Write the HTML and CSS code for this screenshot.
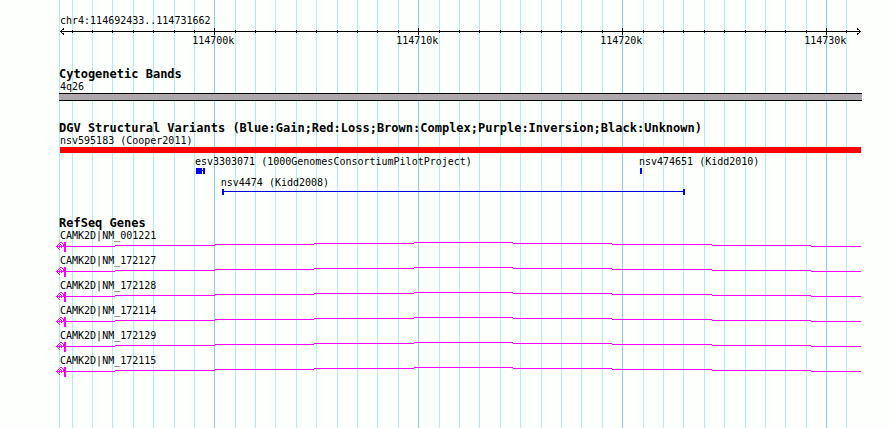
FILE: index.html
```
<!DOCTYPE html>
<html lang="en">
<head>
<meta charset="utf-8">
<title>chr4:114692433..114731662</title>
<link rel="stylesheet" href="styles.css">
</head>
<body>
<main class="browser">
  <svg class="grid" id="grid" viewBox="0 0 890 428" preserveAspectRatio="none" aria-hidden="true"></svg>

  <header class="ruler">
    <h1 class="label">chr4:114692433..114731662</h1>
    <svg class="strip axis" id="axis" viewBox="0 0 890 8" preserveAspectRatio="none" aria-hidden="true">
      <path class="line" d="M60 4h801v1h-801z"/>
      <path class="head" d="M64 1.500L60.500 4.500L64 7.500M857 1.500L860.500 4.500L857 7.500"/>
    </svg>
    <div class="scale"><span>114700k</span><span>114710k</span><span>114720k</span><span>114730k</span></div>
  </header>

  <section class="track">
    <h2>Cytogenetic Bands</h2>
    <p class="label">4q26</p>
    <svg class="strip" viewBox="0 0 890 8" preserveAspectRatio="none" aria-hidden="true">
      <path class="band-fill" d="M59 0h803v8h-803z"/>
      <path class="line" d="M59 0h803v1h-803zM59 7h803v1h-803z"/>
    </svg>
  </section>

  <section class="track variants">
    <h2>DGV Structural Variants (Blue:Gain;Red:Loss;Brown:Complex;Purple:Inversion;Black:Unknown)</h2>
    <div class="row">
      <p class="label">nsv595183 (Cooper2011)</p>
      <svg class="strip" viewBox="0 0 890 7" preserveAspectRatio="none" aria-hidden="true">
        <path class="loss" d="M60 0h801v6h-801z"/>
      </svg>
    </div>
    <div class="row">
      <div class="pair"><p>esv3303071 (1000GenomesConsortiumPilotProject)</p><p>nsv474651 (Kidd2010)</p></div>
      <svg class="strip" viewBox="0 0 890 7" preserveAspectRatio="none" aria-hidden="true">
        <path class="gain" d="M196 0h6v6h-6zM202 2h1v1h-1zM203 0h2v6h-2zM640 0h2v6h-2z"/>
      </svg>
    </div>
    <div class="row">
      <p class="label inner">nsv4474 (Kidd2008)</p>
      <svg class="strip" viewBox="0 0 890 7" preserveAspectRatio="none" aria-hidden="true">
        <path class="gain" d="M222 0h2v6h-2zM683 0h2v6h-2z"/>
        <path class="gain-line" d="M224 2h459v1h-459z"/>
      </svg>
    </div>
  </section>

  <section class="track genes">
    <h2>RefSeq Genes</h2>
    <div id="genes"></div>
  </section>
</main>
<script src="script.js"></script>
</body>
</html>
```
FILE: styles.css
```
body {
  margin: 0;
  background: #fdfffc;
  color: #000;
  font: 10px/12px "DejaVu Sans Mono", monospace;
}

.browser {
  position: relative;
  z-index: 0;
  box-sizing: border-box;
  min-height: 100vh;
  padding-top: 15px;
  overflow: hidden;
}

/* Guide lines lie behind every track */
.grid {
  position: absolute;
  top: 0;
  left: 0;
  width: 100%;
  height: 100%;
  z-index: -1;
  shape-rendering: crispEdges;
}
.minor { fill: #afeeee; }
.major { fill: #87ceeb; }

h1, h2, p { margin: 0; white-space: nowrap; }
h1 { font: inherit; }
h2 {
  padding-left: 59px;
  font-size: 12px;
  line-height: 13px;
}

.label { padding-left: 60px; }
.inner { padding-left: 24.8%; }

.pair {
  display: grid;
  grid-template-columns: minmax(0, 444fr) minmax(0, 251fr);
  padding-left: 21.9%;
}

.scale {
  display: flex;
  justify-content: space-between;
  padding: 0 4.9% 0 21.6%;
}

.track { margin-top: 21px; }

.strip {
  display: block;
  width: 100%;
  height: 8px;
  shape-rendering: crispEdges;
  overflow: visible;
}
.variants .strip { height: 7px; }
.variants .row + .row { margin-top: 2px; }
.genes .strip { height: 10px; }
.genes .row + .row { margin-top: 3px; }

.line { fill: #000; }
.head { fill: none; stroke: #000; }
.band-fill { fill: #aca8ac; }
.loss { fill: #f00; }
.gain { fill: #00f; }
.gain-line { fill: #0000dc; }
.gene { fill: #f0f; }
```
FILE: script.js
```
const minor = [59, 72, 92, 112, 133, 153, 174, 194, 235, 255, 275, 296, 316, 337, 357,
  377, 398, 439, 459, 479, 500, 520, 541, 561, 581, 602, 643, 663, 683, 704, 724, 745,
  765, 785, 806, 846];
const major = [214, 418, 622, 826];
const genes = ["NM_001221", "NM_172127", "NM_172128", "NM_172114", "NM_172129", "NM_172115"];

// Vertical one-unit bars at each x
const bars = (xs, y, h) => xs.map(x => `M${x} ${y}h1v${h}h-1z`).join("");

document.getElementById("grid").innerHTML =
  `<path class="minor" d="${bars(minor, 0, 428)}"/><path class="major" d="${bars(major, 0, 428)}"/>`;

document.getElementById("axis").insertAdjacentHTML("beforeend",
  `<path class="line" d="${bars(minor.slice(1), 3, 3)}${bars(major, 1, 7)}"/>`);

// The intron line rises to the middle of the view and falls again
const steps = [57, 115, 215, 314, 414, 513, 612, 712, 811, 861];
const intron = steps.slice(0, -1).map((x, i) => {
  const w = steps[i + 1] - x;
  return `M${x} ${Math.abs(4 - i)}h${w}v1h-${w}z`;
}).join("");

// Strand arrow, drawn cell by cell
const arrow = [[56, 4], [57, 3], [58, 2], [59, 1], [60, 0], [61, 0], [62, 1], [63, 2], [63, 3],
  [57, 5], [58, 6], [59, 7], [59, 3], [60, 2], [61, 3], [61, 5], [59, 5]]
  .map(([x, y]) => `M${x} ${y}h1v1h-1z`).join("");

document.getElementById("genes").innerHTML = genes.map(id => `
  <div class="row">
    <p class="label">CAMK2D|${id}</p>
    <svg class="strip" viewBox="0 0 890 10" preserveAspectRatio="none" aria-hidden="true">
      <path class="gene" d="${intron}${arrow}M64 0h2v10h-2z"/>
    </svg>
  </div>`).join("");
```
